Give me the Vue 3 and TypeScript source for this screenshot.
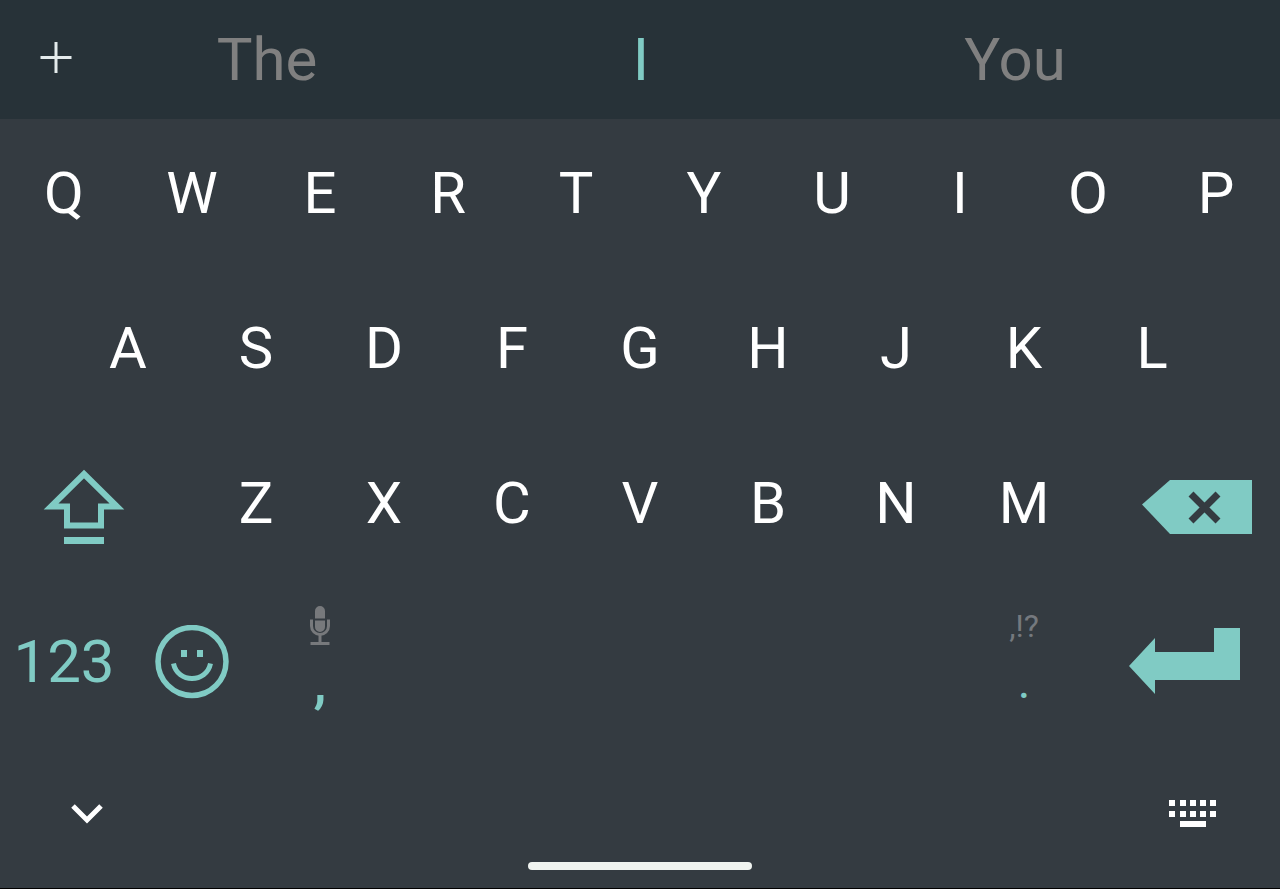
<script setup lang="ts">
const suggestions: { text: string; active: boolean }[] = [
  { text: 'The', active: false },
  { text: 'I', active: true },
  { text: 'You', active: false },
]
const topRow: string[] = [...'QWERTYUIOP']
const homeRow: string[] = [...'ASDFGHJKL']
const bottomRow: string[] = [...'ZXCVBNM']
const dotColumns: number[] = [0, 11, 21, 31, 41]
</script>

<template>
  <main class="keyboard">
    <header class="suggestions">
      <button class="add" type="button" aria-label="More">
        <svg width="48" height="48" viewBox="0 0 48 48" aria-hidden="true">
          <path d="M24 8V39M8.500 23.500H39.500" fill="none" stroke="#e4ebec" stroke-width="3" />
        </svg>
      </button>
      <button
        v-for="item in suggestions"
        :key="item.text"
        class="suggestion"
        :class="{ active: item.active }"
        type="button"
      >{{ item.text }}</button>
    </header>

    <section class="keys" aria-label="Keys">
      <div class="row">
        <button v-for="k in topRow" :key="k" class="key letter" type="button">{{ k }}</button>
      </div>
      <div class="row">
        <button v-for="k in homeRow" :key="k" class="key letter" type="button">{{ k }}</button>
      </div>
      <div class="row">
        <button class="key wide shift" type="button" aria-label="Shift">
          <svg width="84" height="76" viewBox="0 0 84 76" aria-hidden="true">
            <path d="M42 5L75 37.500H59V56.500H25V37.500H9Z" fill="none" stroke="#80cbc4" stroke-width="6" />
            <path d="M22 71.500H62" stroke="#80cbc4" stroke-width="7" />
          </svg>
        </button>
        <button v-for="k in bottomRow" :key="k" class="key letter" type="button">{{ k }}</button>
        <button class="key wide delete" type="button" aria-label="Backspace">
          <svg width="110" height="56" viewBox="0 0 110 56" aria-hidden="true">
            <path d="M0 25.500L28 1H110V55H28Z" fill="#80cbc4" />
            <path d="M49 15L76 42M76 15L49 42" stroke="#343b41" stroke-width="7" />
          </svg>
        </button>
      </div>
      <div class="row">
        <button class="key numbers" type="button">123</button>
        <button class="key" type="button" aria-label="Emoji">
          <svg width="74" height="74" viewBox="0 0 74 74" aria-hidden="true">
            <circle cx="37" cy="36.500" r="34" fill="none" stroke="#80cbc4" stroke-width="5.500" />
            <path d="M26 25h6v7h-6zM42 25h6v7h-6z" fill="#80cbc4" />
            <path d="M18.500 38.500C22.500 58.500 51.500 58.500 55.500 38.500" fill="none" stroke="#80cbc4" stroke-width="5" />
          </svg>
        </button>
        <button class="key stacked" type="button" aria-label="Comma, voice input">
          <span class="hint">
            <svg width="20" height="40" viewBox="0 0 20 40" aria-hidden="true">
              <path d="M5 12.500V5a5 5 0 0 1 10 0v7.500zM5 14.500h10V21a5 5 0 0 1-10 0z" fill="#77797c" />
              <path d="M1.500 13.500V20a8.500 8.500 0 0 0 17 0V13.500M10 28.500V37M0.500 37.500H19.500" fill="none" stroke="#77797c" stroke-width="3" />
            </svg>
          </span>
          <span class="mark comma">,</span>
        </button>
        <button class="key space" type="button" aria-label="Space"></button>
        <button class="key stacked" type="button">
          <span class="hint">,!?</span>
          <span class="mark dot">.</span>
        </button>
        <button class="key wide" type="button" aria-label="Enter">
          <svg width="112" height="70" viewBox="0 0 112 70" aria-hidden="true">
            <path d="M1 39L27 11V25H86V1H112V53H27V67Z" fill="#80cbc4" />
          </svg>
        </button>
      </div>
    </section>

    <footer class="system">
      <button class="nav" type="button" aria-label="Hide keyboard">
        <svg width="32" height="20" viewBox="0 0 32 20" aria-hidden="true">
          <path d="M2 2L16 16L30 2" fill="none" stroke="#fff" stroke-width="5" />
        </svg>
      </button>
      <span class="home"></span>
      <button class="nav right" type="button" aria-label="Switch keyboard">
        <svg width="48" height="28" viewBox="0 0 48 28" aria-hidden="true">
          <g fill="#fff">
            <rect v-for="x in dotColumns" :key="`a${x}`" :x="x" y="0" width="6" height="6" />
            <rect v-for="x in dotColumns" :key="`b${x}`" :x="x" y="11" width="6" height="6" />
            <rect x="11" y="21" width="26" height="6" />
          </g>
        </svg>
      </button>
    </footer>
  </main>
</template>

<style>
body {
  margin: 0;
  background: #000;
}
</style>

<style scoped>
.keyboard {
  box-sizing: border-box;
  display: flex;
  flex-direction: column;
  min-height: 100vh;
  border-bottom: 1px solid #000;
  background: #343b41;
  font-family: Roboto, "Liberation Sans", sans-serif;
}
button {
  display: flex;
  align-items: center;
  justify-content: center;
  margin: 0;
  padding: 0;
  border: 0;
  background: none;
  color: inherit;
  font: inherit;
}
svg {
  display: block;
}
.suggestions {
  display: flex;
  height: 119px;
  padding-right: 78px;
  background: #273238;
}
.add {
  width: 80px;
  padding: 0 0 4px 32px;
  box-sizing: border-box;
}
.suggestion {
  flex: 1 1 0;
  color: #808080;
  font-size: 60px;
}
.suggestion.active {
  color: #80cbc4;
}
.row {
  display: flex;
  justify-content: center;
  height: 155px;
}
.key {
  flex: none;
  width: 10%;
  box-sizing: border-box;
  color: #80cbc4;
}
.letter {
  padding-bottom: 8px;
  color: #fff;
  font-size: 58px;
}
.wide {
  width: 15%;
}
.shift {
  padding-right: 24px;
}
.delete {
  padding-left: 26px;
}
.numbers {
  font-size: 60px;
}
.space {
  width: 45%;
}
.stacked {
  flex-direction: column;
}
.hint {
  display: flex;
  align-items: center;
  height: 40px;
  color: #75797e;
  font-size: 32px;
}
.mark {
  font-size: 60px;
  line-height: 72px;
}
.comma {
  font-size: 58px;
  font-weight: 500;
}
.dot {
  font-size: 48px;
}
.system {
  flex: 1 0 auto;
  display: grid;
  grid-template-columns: 1fr 224px 1fr;
  min-height: 149px;
}
.nav {
  justify-content: flex-start;
  padding-left: 71px;
}
.nav.right {
  justify-content: flex-end;
  padding: 0 63px 0 0;
}
.home {
  align-self: end;
  height: 8px;
  margin-bottom: 18px;
  border-radius: 4px;
  background: #f0f4f0;
}
</style>
